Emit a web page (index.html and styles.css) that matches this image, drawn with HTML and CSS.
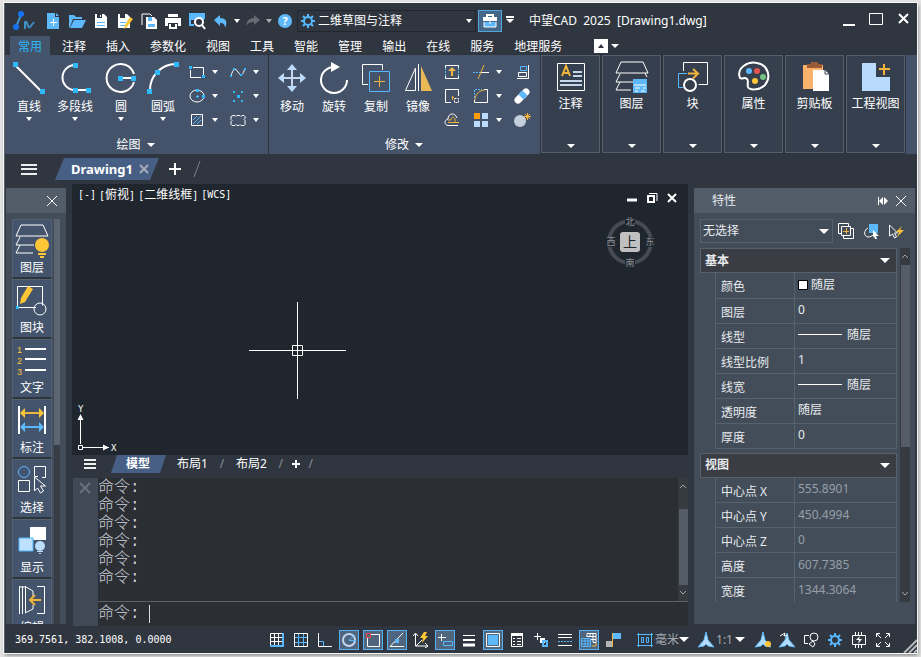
FILE: index.html
```html
<!DOCTYPE html>
<html lang="zh-CN">
<head>
	<meta charset="UTF-8">
	<title>中望CAD 2025 [Drawing1.dwg]</title>
	<link rel="stylesheet" href="styles.css">
</head>
<body>
	<div class="app">
		<!-- 标题栏 -->
		<header class="title_bar">
			<svg class="logo" width="24" height="24" viewBox="0 0 24 24"><path class="logo_line" d="M4 18L9 6M13 20V13C16 11 15 20 18 18L22 13"/><circle class="logo_dot" cx="9" cy="5" r="3"/><circle class="logo_dot" cx="4" cy="18" r="3"/></svg>
			<div class="quick">
				<button aria-label="新建"><svg width="18" height="18" viewBox="0 0 18 18"><path class="fb" d="M3 1h8v4h4v12H3zM12 1l3 3h-3z"/><path d="M9.500 7v7M6 10.500h7"/></svg></button>
				<button aria-label="打开"><svg width="18" height="18" viewBox="0 0 18 18"><path class="fb" d="M1 16V3h5l2 2h6v2H5L2 15zM6 8h12l-4 8H2z"/></svg></button>
				<button aria-label="保存"><svg width="18" height="18" viewBox="0 0 18 18"><path class="fw" d="M3 2h9l3 3v11H3z"/><path class="fd" d="M5 2h5v4H5z"/><path class="fb" d="M5 10h8v1H5zM5 13h8v1H5z"/><path class="fw" d="M8 3h1v2H8z"/></svg></button>
				<button aria-label="另存为"><svg width="18" height="18" viewBox="0 0 18 18"><path class="fw" d="M2 2h9l3 3v11H2z"/><path class="fd" d="M4 2h5v4H4z"/><path class="fb" d="M4 10h6v1H4zM4 13h5v1H4z"/><path class="fy" d="M14 5l3 2-6 8-3 2 1-4z"/></svg></button>
				<button aria-label="全部保存"><svg width="18" height="18" viewBox="0 0 18 18"><path d="M2 13V2h8l2 2"/><path class="fw" d="M6 5h8l3 3v9H6z"/><path class="fb" d="M8 5h4v4H8zM8 12h7v3H8z"/></svg></button>
				<button aria-label="打印"><svg width="18" height="18" viewBox="0 0 18 18"><path class="fw" d="M4 2h10v3H4zM1 6h16v8h-3v-3H4v3H1z"/><path class="s2" d="M6 12v4h6v-4"/></svg></button>
				<button aria-label="打印预览"><svg width="18" height="18" viewBox="0 0 18 18"><path class="fb" d="M2 2h14v6H2z"/><path class="b s2" d="M6 13H2V2h14v5"/><circle class="lens" cx="11" cy="10" r="4"/><path class="s2" d="M14 13l3 4"/></svg></button>
				<button aria-label="撤消"><svg width="18" height="18" viewBox="0 0 18 18"><path class="fb" d="M2 8l6-5v3c6 0 8 4 5 10 0-4-2-5-5-5v3z"/></svg></button>
				<button class="narrow" aria-label="撤消列表"><i class="caret small"></i></button>
				<button class="dim" aria-label="重做"><svg width="18" height="18" viewBox="0 0 18 18"><path class="fg" d="M16 8l-6-5v3C4 6 3 10 2 14c2-3 4-4 8-4v3z"/></svg></button>
				<button class="narrow dim" aria-label="重做列表"><i class="caret small"></i></button>
				<button class="help" aria-label="帮助"><span>?</span></button>
			</div>
			<label class="workspace">
				<svg width="16" height="16" viewBox="0 0 16 16"><circle class="b s2" cx="8" cy="8" r="4"/><path class="b s2" d="M8 1v3M8 12v3M1 8h3M12 8h3M3 3l2 2M11 11l2 2M13 3l-2 2M5 11l-2 2"/></svg>
				<select aria-label="工作空间"><option>二维草图与注释</option></select>
				<i class="caret small"></i>
			</label>
			<button class="tool_box" aria-label="工具箱"><svg width="18" height="18" viewBox="0 0 18 18"><path class="s2" d="M6 5V3h6v2"/><path class="fw" d="M2 5h14v4H2z"/><path class="fb" d="M3 10h12v5H3z"/><path d="M3 10v5h12v-5M9 8v4"/></svg></button>
			<button class="narrow more" aria-label="自定义"><i class="caret"></i></button>
			<h1>中望CAD&nbsp; 2025&nbsp; [Drawing1.dwg]</h1>
			<div class="win_btns">
				<button aria-label="最小化"><svg width="16" height="16" viewBox="0 0 16 16"><path class="s2" d="M2 14h12"/></svg></button>
				<button aria-label="最大化"><svg width="16" height="16" viewBox="0 0 16 16"><path d="M1.500 2.500h13v11h-13z"/></svg></button>
				<button aria-label="关闭"><svg width="16" height="16" viewBox="0 0 16 16"><path class="s2" d="M4 3l9 9M13 3l-9 9"/></svg></button>
			</div>
		</header>

		<!-- 菜单 -->
		<nav class="menu">
			<a class="on" href="#">常用</a><a href="#">注释</a><a href="#">插入</a><a href="#">参数化</a><a href="#">视图</a><a href="#">工具</a><a href="#">智能</a><a href="#">管理</a><a href="#">输出</a><a href="#">在线</a><a href="#">服务</a><a href="#">地理服务</a>
			<button class="fold" aria-label="折叠"><i class="caret small up"></i></button>
			<button class="fold_more" aria-label="折叠选项"><i class="caret"></i></button>
		</nav>

		<!-- 功能区 -->
		<div class="ribbon">
			<section class="group">
				<div class="tools">
					<button class="big wide"><svg width="32" height="32" viewBox="0 0 32 32"><path class="s2" d="M2 3l26 26"/><path class="fc" d="M0 0h5v5H0zM27 27h5v5h-5z"/></svg>直线<i class="caret small"></i></button>
					<button class="big wide"><svg width="32" height="32" viewBox="0 0 32 32"><path class="s2" d="M16 3A12 12 0 0 0 16 28H28"/><path class="fc" d="M14 1h5v5h-5zM14 26h5v5h-5zM27 26h5v5h-5z"/></svg>多段线<i class="caret small"></i></button>
					<button class="big wide"><svg width="32" height="32" viewBox="0 0 32 32"><path class="s2" d="M29 12A14 14 0 1 0 29 20M16 16h12"/><path class="fc" d="M13 14h5v5h-5zM26 14h5v5h-5z"/></svg>圆<i class="caret small"></i></button>
					<button class="big arc"><svg width="32" height="32" viewBox="0 0 32 32"><path class="s2" d="M3 29A26 26 0 0 1 29 2"/><path class="fc" d="M27 0h5v5h-5zM8 8h5v5H8zM0 27h5v5H0z"/></svg>圆弧<i class="caret small"></i></button>
					<div class="minis draw">
						<button aria-label="矩形"><svg width="18" height="18" viewBox="0 0 18 18"><path d="M5 4.500h10.500V12M2.500 7v7.500H13"/><path class="fc" d="M1 3h3v3H1zM14 12h3v3h-3z"/></svg><i class="caret small"></i></button>
						<button aria-label="样条曲线"><svg width="18" height="18" viewBox="0 0 18 18"><path d="M2 13C4 6 6 4 9 9s5 3 7-4"/><path class="fc" d="M1 12h2v2H1zM4 5h2v2H4zM11 11h2v2h-2zM15 5h2v2h-2z"/></svg><i class="caret small"></i></button>
						<button aria-label="椭圆"><svg width="18" height="18" viewBox="0 0 18 18"><ellipse cx="9" cy="9" rx="7" ry="6"/><path class="fc" d="M8 2h3v3H8zM14 8h3v3h-3z"/><path class="b" d="M8 9.500h3M9.500 8v3"/></svg><i class="caret small"></i></button>
						<button aria-label="点"><svg width="18" height="18" viewBox="0 0 18 18"><path class="fc" d="M4 4h2v2H4zM12 4h2v2h-2zM8 8h3v3H8zM4 13h2v2H4zM12 13h2v2h-2z"/></svg><i class="caret small"></i></button>
						<button aria-label="填充"><svg width="18" height="18" viewBox="0 0 18 18"><path d="M3.500 3.500h11v11h-11z"/><path class="b" d="M5 9l4-4M5 13l8-8M9 13l4-4"/></svg><i class="caret small"></i></button>
						<button aria-label="修订云线"><svg width="18" height="18" viewBox="0 0 18 18"><path d="M4 4.500h2l1 1 1-1h3l1 1 1-1h2l1 1v2l-1 1 1 1v4l-1 1h-3l-1-1-1 1H8l-1-1-1 1H3l-1-1v-3l1-1-1-1v-3z"/></svg><i class="caret small"></i></button>
					</div>
				</div>
				<button class="group_name">绘图<i class="caret"></i></button>
			</section>
			<section class="group modify">
				<div class="tools">
					<button class="big"><svg width="32" height="32" viewBox="0 0 32 32"><path class="move s2" d="M16 5v22M5 16h22"/><path class="fl" d="M16 2l5 6H11zM16 30l5-6H11zM2 16l6-5v10zM30 16l-6-5v10z"/></svg>移动</button>
					<button class="big"><svg width="32" height="32" viewBox="0 0 32 32"><path class="s2" d="M17 5A13 13 0 1 0 29 18"/><path class="fw" d="M13 0l9 5-9 5z"/></svg>旋转</button>
					<button class="big"><svg width="32" height="32" viewBox="0 0 32 32"><path d="M8 22.500H2.500v-20h20V8"/><path class="b" d="M9.500 9.500h20v20h-20z"/><path class="y" d="M14 19.500h11M19.500 14v11"/></svg>复制</button>
					<button class="big"><svg width="32" height="32" viewBox="0 0 32 32"><path d="M16.500 2v27M13.500 6v22.500h-10z"/><path class="fa" d="M19 4l11 25H19z"/></svg>镜像</button>
					<div class="minis edit">
						<button aria-label="拉伸"><svg width="18" height="18" viewBox="0 0 18 18"><path d="M2.500 5V2.500h13V5M2.500 13v2.500h13V13"/><path class="b dash" d="M2.500 5v8M15.500 5v8"/><path class="y s2" d="M9 13V7"/><path class="fa" d="M5 8l4-4 4 4z"/></svg></button>
						<button aria-label="修剪"><svg width="18" height="18" viewBox="0 0 18 18"><path class="b dash" d="M1 9.500h8"/><path d="M9 9.500h8"/><path class="y" d="M6 16l6-14"/></svg><i class="caret small"></i></button>
						<button aria-label="对齐"><svg width="18" height="18" viewBox="0 0 18 18"><path d="M15.500 2v14M4 15.500h11M5.500 9.500h8v4h-8z"/><path class="b" d="M7.500 3.500h6v4h-6z"/></svg></button>
						<button aria-label="缩放"><svg width="18" height="18" viewBox="0 0 18 18"><path d="M8 15.500H2.500v-13h13V9"/><path class="dash" d="M11.500 11.500h4v4h-4z"/><path class="y" d="M9 9l3 3M9.500 13V9"/></svg></button>
						<button aria-label="圆角"><svg width="18" height="18" viewBox="0 0 18 18"><path d="M12 2.500h3.500v13H2.500V13"/><path class="y" d="M3 13C3 7 8 3 13 3"/><path class="b dash" d="M2.500 11V2.500H10"/></svg><i class="caret small"></i></button>
						<button aria-label="删除"><svg width="18" height="18" viewBox="0 0 18 18"><path class="eraser_w" d="M5 13l8-8"/><path class="eraser_b" d="M8 10l4-4"/></svg></button>
						<button aria-label="偏移"><svg width="18" height="18" viewBox="0 0 18 18"><path d="M15 14.500H5C1 14 1 9 5 8c0-6 7-7 9-1"/><path class="y" d="M16 11.500H5M12 11V8c-1-3-4-2-4 1H5"/></svg></button>
						<button aria-label="阵列"><svg width="18" height="18" viewBox="0 0 18 18"><path class="fo" d="M2 2h6v6H2z"/><path class="fl" d="M10 2h6v6h-6zM2 10h6v6H2zM10 10h6v6h-6z"/></svg><i class="caret small"></i></button>
						<button aria-label="分解"><svg width="18" height="18" viewBox="0 0 18 18"><circle class="ball" cx="7" cy="10" r="6"/><path class="y" d="M11 5.500h7M14.500 2v7M12 3l5 5M17 3l-5 5"/></svg></button>
					</div>
				</div>
				<button class="group_name">修改<i class="caret"></i></button>
			</section>
			<button class="panel"><svg width="32" height="32" viewBox="0 0 32 32"><path d="M2.500 2.500h27v27h-27z"/><path class="y s2" d="M7 15l4-10 4 10M8 12h6"/><path class="move s2" d="M18 11h9M18 15h9M5 20h22M5 24h22"/></svg>注释<i class="caret"></i></button>
			<button class="panel"><svg width="34" height="32" viewBox="0 0 34 32"><path d="M6 1h22l5 11H1zM5 13l-4 8h17M5 21l-4 8h15M30 12l2 4"/><path class="fb" d="M18 18h14v14H18z"/><path class="grid_in" d="M19 24h12M20 27h5M28 27h3M20 30h3M26 30h4"/></svg>图层<i class="caret"></i></button>
			<button class="panel"><svg width="32" height="32" viewBox="0 0 32 32"><path d="M6.500 10V1.500h24v22h-9"/><path class="b" d="M10 12.500H1.500v14H6"/><circle class="s2" cx="13" cy="24" r="6"/><path class="y s2" d="M11 12.500h10M16 8l5 4.500-5 5"/></svg>块<i class="caret"></i></button>
			<button class="panel"><svg width="34" height="32" viewBox="0 0 34 32"><path class="s2" d="M3 17C-1 7 11 0 20 2c12 2 14 15 8 22-6 6-16 5-17 2-1-4 1-6-1-8-3-3-4 1-7-1z"/><circle class="fb" cx="12" cy="10" r="3"/><circle class="fr" cx="20" cy="10" r="3"/><circle class="fn" cx="26" cy="16" r="3"/><circle class="fy" cx="18" cy="20" r="3"/></svg>属性<i class="caret"></i></button>
			<button class="panel"><svg width="32" height="32" viewBox="0 0 32 32"><path class="paste" d="M4 4h20v24H4z"/><path class="clip" d="M8 3h4V1h7v2h4v4H8z"/><path class="fw" d="M14 9h12l4 4v17H14z"/><path class="fold_line" d="M26 9v4h4"/></svg>剪贴板<i class="caret"></i></button>
			<button class="panel"><svg width="32" height="32" viewBox="0 0 32 32"><path class="part" d="M2 2h14v14h14v14H2z"/><path class="y s2" d="M24 3v11M19 8h11"/></svg>工程视图<i class="caret"></i></button>
		</div>

		<!-- 文件标签 -->
		<div class="doc_bar">
			<button class="burger" aria-label="文件列表"></button>
			<div class="doc_tab"><a href="#">Drawing1</a><button aria-label="关闭图纸"><svg width="10" height="10" viewBox="0 0 10 10"><path class="s2" d="M1 1l8 8M9 1L1 9"/></svg></button></div>
			<button class="add" aria-label="新建图纸"><svg width="12" height="12" viewBox="0 0 12 12"><path class="s2" d="M6 0v12M0 6h12"/></svg></button>
			<svg class="slash" width="8" height="16" viewBox="0 0 8 16"><path d="M7 0L1 16"/></svg>
		</div>

		<div class="main">
			<!-- 左侧工具栏 -->
			<aside class="side">
				<div class="side_head"><button aria-label="关闭工具栏"><svg width="10" height="10" viewBox="0 0 10 10"><path d="M0 0l10 10M10 0L0 10"/></svg></button></div>
				<div class="side_body">
					<div class="side_list">
						<button><svg width="34" height="34" viewBox="0 0 34 34"><path d="M6 1h22l5 11H1zM5 13l-4 8h18M5 21l-4 8h17"/><circle class="fy" cx="27" cy="21" r="7"/><path class="fy" d="M23 29h8v2h-8zM25 32h4v2h-4z"/></svg>图层</button>
						<button><svg width="34" height="34" viewBox="0 0 34 34"><path d="M2.500 25V2.500h25v19M4 23.500h17"/><circle cx="25" cy="25" r="6"/><path class="fy" d="M13 2l5 3-8 13-5 2 1-6z"/><path class="fc" d="M1 22h3v3H1z"/></svg>图块</button>
						<button><svg width="34" height="34" viewBox="0 0 34 34"><path class="s2" d="M10 5h21M10 15h21M10 26h21"/><text class="num" x="2" y="9">1</text><text class="num" x="2" y="20">2</text><text class="num" x="2" y="31">3</text></svg>文字</button>
						<button><svg width="34" height="34" viewBox="0 0 34 34"><path class="s2" d="M4 2v28M30 2v28"/><path class="y s2" d="M8 9h18"/><path class="fy" d="M5 9l5-5v10zM29 9l-5-5v10z"/><path class="b s2" d="M8 23h18"/><path class="fb" d="M5 23l5-5v10zM29 23l-5-5v10z"/></svg>标注</button>
						<button><svg width="34" height="34" viewBox="0 0 34 34"><circle class="b" cx="9" cy="8" r="5.500"/><path d="M23 12.500h-3.500v-10h11v11H27M3.500 16.500h11v11h-11z"/><path d="M19.500 13v14l3-3 3 5 3-2-3-5h5z"/></svg>选择</button>
						<button><svg width="34" height="34" viewBox="0 0 34 34"><path class="fw" d="M15 3h16v13H15z"/><path class="view_box" d="M4 14h14v13H4z"/><circle class="fl" cx="25" cy="22" r="5"/><path class="fl" d="M22 27h6v1h-6zM24 29h2v1h-2z"/></svg>显示</button>
						<button><svg width="34" height="34" viewBox="0 0 34 34"><path d="M4.500 2v28M7.500 2v28M10.500 2v27M4 3h7l7 4v5M10 29l8-4v-4M22 2.500h7.500v27H22"/><path class="y s2" d="M26 16H15M20 11l-5 5 5 5"/></svg>编辑</button>
					</div>
					<div class="side_scroll"></div>
				</div>
			</aside>

			<div class="center">
				<!-- 绘图区 -->
				<div class="canvas">
					<div class="view_label"><a href="#">[-]</a><a href="#">[<b>俯视</b>]</a><a href="#">[<b>二维线框</b>]</a><a href="#">[WCS]</a></div>
					<div class="view_btns">
						<button aria-label="最小化视口"><svg width="12" height="12" viewBox="0 0 12 12"><path class="s3" d="M1 8h10"/></svg></button>
						<button aria-label="还原视口"><svg width="12" height="12" viewBox="0 0 12 12"><path d="M3 1.500h8V9"/><path class="s2" d="M2 4h6v6H2z"/></svg></button>
						<button aria-label="关闭视口"><svg width="12" height="12" viewBox="0 0 12 12"><path class="s2" d="M2 2l8 8M10 2l-8 8"/></svg></button>
					</div>
					<svg class="compass" width="52" height="56" viewBox="0 0 52 56"><circle class="ring" cx="26" cy="27" r="21"/><path class="ring_gap" d="M21 6h10M21 48h10M5 22v10M47 22v10"/><rect class="cube" x="16" y="17" width="20" height="20" rx="3"/><text class="top_t" x="26" y="32">上</text><text x="26" y="10">北</text><text x="26" y="51">南</text><text x="7" y="30">西</text><text x="46" y="30">东</text></svg>
					<svg class="cross" width="98" height="98" viewBox="0 0 98 98"><path d="M48.500 0v97M0 48.500h97M43.500 43.500h10v10h-10z"/></svg>
					<svg class="ucs" width="46" height="50" viewBox="0 0 46 50"><path d="M6.500 41V15M9 44.500h26"/><path d="M4.500 42.500h4v4h-4z"/><path class="fw" d="M6.500 11l3 6h-6zM35 44.500l-6-3v6z"/><text x="4" y="9">Y</text><text x="37" y="48">X</text></svg>
				</div>
				<div class="layout_bar">
					<button class="burger" aria-label="布局列表"></button>
					<a class="on" href="#">模型</a><a href="#">布局1</a><span>/</span><a href="#">布局2</a><span>/</span><button class="add" aria-label="新建布局"><svg width="8" height="8" viewBox="0 0 8 8"><path class="s2" d="M4 0v8M0 4h8"/></svg></button><span>/</span>
				</div>
				<!-- 命令行 -->
				<div class="cmd">
					<div class="cmd_grip"><button aria-label="关闭命令行"><svg width="12" height="12" viewBox="0 0 12 12"><path class="s2" d="M1 1l10 10M11 1L1 11"/></svg></button></div>
					<div class="cmd_text">
						<div class="cmd_top">
							<ul>
								<li>命令:</li>
								<li>命令:</li>
								<li>命令:</li>
								<li>命令:</li>
								<li>命令:</li>
								<li>命令:</li>
							</ul>
							<div class="scroll"><svg width="8" height="5" viewBox="0 0 8 5"><path d="M1 4l3-3 3 3"/></svg><div class="thumb cmd_thumb"></div><svg width="8" height="5" viewBox="0 0 8 5"><path d="M1 1l3 3 3-3"/></svg></div>
						</div>
						<div class="cmd_line"><label for="cmd">命令:</label><i class="cursor"></i><input id="cmd" type="text"></div>
					</div>
				</div>
			</div>

			<!-- 特性面板 -->
			<aside class="props">
				<div class="props_head"><h2>特性</h2><button aria-label="自动隐藏"><svg width="12" height="10" viewBox="0 0 12 10"><path d="M1.500 1v8"/><path class="fw" d="M2 5l4-4v8zM11 5L7 1v8z"/></svg></button><button aria-label="关闭特性"><svg width="10" height="10" viewBox="0 0 10 10"><path d="M0 0l10 10M10 0L0 10"/></svg></button></div>
				<div class="pick">
					<label><select aria-label="选择对象"><option>无选择</option></select><i class="caret large"></i></label>
					<div class="pick_btns">
						<button aria-label="加选"><svg width="16" height="16" viewBox="0 0 16 16"><path d="M3 10.500H.500V.500h10V3M13 5.500h2.500v10h-10V13M3.500 3.500h9v9h-9z"/><path class="y" d="M5 8.500h6M8.500 5v6"/></svg></button>
						<button aria-label="选择对象"><svg width="16" height="16" viewBox="0 0 16 16"><path class="fb" d="M6 1h9v9H6z"/><path d="M5 5c-4 2-5 8 0 9 2 0 4-1 5-2"/><path class="fw" d="M10 7l6 6h-3l1 3h-2l-1-3-1 2z"/></svg></button>
						<button aria-label="快速选择"><svg width="16" height="16" viewBox="0 0 16 16"><path d="M1.500 2v11l3-2 2 4 2-1-2-4h3z"/><path class="fy" d="M14 3L8 9h3l-2 5 7-7h-4z"/></svg></button>
					</div>
				</div>
				<div class="props_body">
					<div class="props_list">
						<button class="sect">基本<i class="caret large"></i></button>
						<table>
							<tr><th>颜色</th><td><i class="swatch"></i>随层</td></tr>
							<tr><th>图层</th><td>0</td></tr>
							<tr><th>线型</th><td><i class="line"></i>随层</td></tr>
							<tr><th>线型比例</th><td>1</td></tr>
							<tr><th>线宽</th><td><i class="line"></i>随层</td></tr>
							<tr><th>透明度</th><td>随层</td></tr>
							<tr><th>厚度</th><td>0</td></tr>
						</table>
						<button class="sect">视图<i class="caret large"></i></button>
						<table class="read">
							<tr><th>中心点 X</th><td>555.8901</td></tr>
							<tr><th>中心点 Y</th><td>450.4994</td></tr>
							<tr><th>中心点 Z</th><td>0</td></tr>
							<tr><th>高度</th><td>607.7385</td></tr>
							<tr><th>宽度</th><td>1344.3064</td></tr>
						</table>
					</div>
					<div class="scroll"><svg width="8" height="5" viewBox="0 0 8 5"><path d="M1 4l3-3 3 3"/></svg><div class="thumb"></div><svg width="8" height="5" viewBox="0 0 8 5"><path d="M1 1l3 3 3-3"/></svg></div>
				</div>
			</aside>
		</div>

		<!-- 状态栏 -->
		<footer class="status">
			<p>369.7561, 382.1008, 0.0000</p>
			<div class="switches">
				<button aria-label="捕捉"><svg width="16" height="16" viewBox="0 0 16 16"><path d="M1.500 1.500h13v13h-13zM5.500 1v14M9.500 1v14M1 5.500h14M1 9.500h14"/><path class="b s2" d="M14 1v13H1"/></svg></button>
				<button aria-label="栅格"><svg width="16" height="16" viewBox="0 0 16 16"><path class="b" d="M5.500 1v14M10.500 1v14M1 5.500h14M1 10.500h14"/><path d="M1.500 1.500h13v13h-13z"/></svg></button>
				<button aria-label="正交"><svg width="16" height="16" viewBox="0 0 16 16"><path d="M1.500 1v13.500H15"/><path class="b" d="M2 9.500h4.500V14"/></svg></button>
				<button class="on" aria-label="极轴"><svg width="16" height="16" viewBox="0 0 16 16"><circle class="move s2" cx="8" cy="8" r="6"/><path class="b" d="M8 8.500h7M8 8l6-5"/></svg></button>
				<button class="on" aria-label="对象捕捉"><svg width="16" height="16" viewBox="0 0 16 16"><path d="M6 2.500h8.500v12h-12V6"/><path class="red" d="M1.500 1.500h4v4h-4z"/></svg></button>
				<button class="on" aria-label="对象追踪"><svg width="16" height="16" viewBox="0 0 16 16"><path d="M14 1L1 14.500h14"/><path class="fb" d="M6 7h4v4H6z"/></svg></button>
				<button aria-label="动态UCS"><svg width="16" height="16" viewBox="0 0 16 16"><path d="M2.500 2v12H15M3 14l6-6M0 4l2.500-3L5 4M12 11l3 3-3 2"/><path class="fy" d="M11 0L7 6h3l-1 5 6-7h-3l2-4z"/></svg></button>
				<button class="on" aria-label="动态输入"><svg width="16" height="16" viewBox="0 0 16 16"><path d="M1 5.500h8M4.500 2v7"/><path class="b" d="M6.500 9.500h9v4h-9z"/></svg></button>
				<button aria-label="线宽显示"><svg width="16" height="16" viewBox="0 0 16 16"><path d="M2 3.500h12"/><path class="s2" d="M2 8h12"/><path class="s3" d="M2 13h12"/></svg></button>
				<button class="on" aria-label="透明度"><svg width="16" height="16" viewBox="0 0 16 16"><path d="M1.500 1.500h13v13h-13z"/><path class="fb" d="M3 3h10v10H3z"/></svg></button>
				<button aria-label="快捷特性"><svg width="16" height="16" viewBox="0 0 16 16"><path d="M2.500 1.500h11v13h-11zM4 6.500h2M8 6.500h4M4 9.500h2M8 9.500h4M4 12.500h2M8 12.500h4"/><path class="fw" d="M2 1h12v3H2z"/></svg></button>
				<button aria-label="选择循环"><svg width="16" height="16" viewBox="0 0 16 16"><path d="M1 4.500h7M4.500 1v7"/><path class="fw" d="M7 6h5v5H7z"/><path class="b s2" d="M10 9h4v5h-4z"/></svg></button>
				<button aria-label="注释监视"><svg width="16" height="16" viewBox="0 0 16 16"><path d="M1 2.500h14M1 5.500h14M1 13.500h14"/><path class="b dash" d="M1 9.500h14"/></svg></button>
				<button class="on" aria-label="布局视口"><svg width="16" height="16" viewBox="0 0 16 16"><path d="M6 5V1.500h9v9H12M9 1v4M12 1v9M6 4.500h9M10 7.500h5"/><path class="b" d="M.500 6.500h9v8h-9zM4 6v9M7 6v9M0 9h10M0 12h10"/><path class="y" d="M15 11v3h-4"/></svg></button>
				<button aria-label="颜色"><svg width="16" height="16" viewBox="0 0 16 16"><path class="fg2" d="M1 9h7v6H1z"/><path class="fb" d="M8 1h8v6H8z"/><path class="y" d="M7.500 1v14"/></svg></button>
			</div>
			<button class="unit"><svg width="16" height="16" viewBox="0 0 16 16"><path class="b" d="M1.500 1v14M14.500 1v14M0 2.500h16M0 13.500h16M4.500 5.500h2v5h-2zM9.500 5.500h2v5h-2z"/></svg>毫米<i class="caret large"></i></button>
			<button class="scale"><svg width="16" height="16" viewBox="0 0 16 16"><path class="jet" d="M8 0l2 8 6 7-6-1-2-2-2 2-6 1 6-7z"/></svg><span>1:1</span><i class="caret large"></i></button>
			<div class="switches">
				<button aria-label="注释可见性"><svg width="16" height="16" viewBox="0 0 16 16"><path class="jet" d="M8 0l2 8 6 7-6-1-2-2-2 2-6 1 6-7z"/><circle class="fy" cx="13" cy="12" r="3"/></svg></button>
				<button aria-label="自动缩放"><svg width="16" height="16" viewBox="0 0 16 16"><path class="jet" d="M8 1l2 7 6 7-6-1-2-2-2 2-6 1 6-7z"/><path d="M1 4l5-3-1 3 4-1"/></svg></button>
				<button aria-label="隔离对象"><svg width="16" height="16" viewBox="0 0 16 16"><path d="M6 3.500H1.500v8H5"/><circle cx="11" cy="5" r="4"/><path d="M10 9l-4 3 4 3 2-3z"/></svg></button>
				<button aria-label="设置"><svg width="16" height="16" viewBox="0 0 16 16"><circle class="b s2" cx="8" cy="8" r="4"/><path class="b s2" d="M8 1v3M8 12v3M1 8h3M12 8h3M3 3l2 2M11 11l2 2M13 3l-2 2M5 11l-2 2"/></svg></button>
				<button aria-label="硬件加速"><svg width="16" height="16" viewBox="0 0 16 16"><path d="M1.500 3.500h13v9h-13zM4.500 0v3M7.500 0v3M10.500 0v3M4.500 13v3M7.500 13v3M10.500 13v3"/><path class="fw" d="M9 4L5 8h3l-1 4 4-5H8z"/></svg></button>
				<button aria-label="全屏"><svg width="16" height="16" viewBox="0 0 16 16"><path d="M1.500 5V1.500H5M11 1.500h3.500V5M14.500 11v3.500H11M5 14.500H1.500V11M2 2l4 4M14 2l-4 4M14 14l-4-4M2 14l4-4"/></svg></button>
			</div>
			<svg class="grip" width="14" height="14" viewBox="0 0 14 14"><path class="s2" d="M1 14L14 1M6 14l8-8M11 14l3-3"/></svg>
		</footer>
	</div>
</body>
</html>
```
FILE: styles.css
```css
/* 默认样式 */
*{ margin:0; padding:0; box-sizing:border-box; }
i,b{ font-style:normal; font-weight:normal; }
body{ background:#e4e4e5; color:#fff; font-size:12px; line-height:16px; font-family:"Noto Sans","Noto Sans CJK SC",sans-serif; }
a{ color:inherit; text-decoration:none; }
li{ list-style:none; }
button,input,select{ border:none; background:none; color:inherit; font:inherit; outline:none; }
button{ display:flex; align-items:center; justify-content:center; white-space:nowrap; flex:none; }
select{ -webkit-appearance:none; appearance:none; flex:1; min-width:0; }
h1,h2{ font-size:12px; font-weight:normal; }

/* 图标 */
svg{ display:block; flex:none; fill:none; stroke:#fff; stroke-width:1; }
.s2{ stroke-width:2; }
.s3{ stroke-width:3; }
.b{ stroke:#56b8ff; }
.y{ stroke:#f0b43c; }
.red{ stroke:#f04848; }
.move{ stroke:#c4d6ee; }
.dash{ stroke-dasharray:2 1; }
.fb,.fc,.fw,.fy,.fa,.fo,.fl,.fd,.fg,.fg2,.fr,.fn{ stroke:none; }
.fb{ fill:#5db9fb; }
.fc{ fill:#2fb9fb; }
.fw{ fill:#fff; }
.fy{ fill:#fdc637; }
.fa{ fill:#eab854; }
.fo{ fill:#ff9d0a; }
.fl{ fill:#bcdcfc; }
.fd{ fill:#30363f; }
.fg{ fill:#8a9096; }
.fg2{ fill:#b4b4b4; }
.fr{ fill:#e35550; }
.fn{ fill:#71c283; }
.logo_line{ stroke:#3f8fc4; stroke-width:2; }
.logo_dot{ stroke:none; fill:#1572f5; }
.lens{ fill:#30363f; stroke-width:2; }
.eraser_w{ stroke:#fff; stroke-width:7; stroke-linecap:round; }
.eraser_b{ stroke:#5db9fb; stroke-width:7; }
.ball{ stroke:none; fill:#c4cede; }
.paste{ stroke:none; fill:#fbb36c; }
.clip{ stroke:none; fill:#9a5a35; }
.fold_line{ stroke:#363f4d; }
.part{ stroke:none; fill:#b8dafd; }
.grid_in{ stroke:#fff; stroke-width:1; }
.view_box{ fill:#bde0ff; stroke:#4fb4fa; }
.jet{ stroke:#5db9fb; fill:#b5dcfb; }
.num{ stroke:none; fill:#fdc637; font-family:"Liberation Sans",sans-serif; font-size:9px; }
.caret{ width:0; height:0; border:4px solid transparent; border-top-color:#fff; border-bottom:none; flex:none; }
.caret.small{ border-width:4px 3px 0; }
.caret.large{ border-width:5px 5px 0; }
.caret.up{ border-width:0 3px 4px; border-bottom:4px solid #30363f; }

.app{ margin:3px 4px 4px; min-height:calc(100vh - 7px); display:flex; flex-direction:column; background:#30363f; border-left:1px solid #59616a; box-shadow:0 0 0 1px #f8f8f8, 1px 2px 4px #777; }

/* 标题栏 */
.title_bar{ display:flex; align-items:center; height:33px; padding:3px 0 0 7px; }
.logo{ margin-right:5px; }
.quick{ display:flex; align-items:center; }
.quick button{ width:24px; height:24px; }
.quick .narrow{ width:8px; }
.dim{ opacity:.6; }
.help span{ width:14px; height:14px; border-radius:50%; background:#5db9fb; font-size:11px; line-height:14px; font-weight:bold; }
.workspace{ display:flex; align-items:center; width:179px; height:22px; padding:0 3px 0 2px; margin-right:2px; border:1px solid #22272e; }
.workspace select{ padding-left:2px; }
.tool_box{ width:24px; height:22px; border:1px solid #4fa8dc; background:#456789; }
.more{ width:16px; height:14px; }
.more:before{ content:''; align-self:flex-start; width:8px; height:2px; margin:2px -8px 0 0; background:#fff; }
.title_bar h1{ flex:1; padding-left:11px; white-space:nowrap; }
.win_btns{ display:flex; gap:1px; margin:0 1px 5px 0; }
.win_btns button{ width:26px; height:20px; }

/* 菜单 */
.menu{ display:flex; align-items:center; height:19px; padding-left:3px; }
.menu a{ padding:0 8px; margin:0 2px; height:19px; line-height:22px; white-space:nowrap; }
.menu .on{ background:#44546a; color:#2db8fa; }
.menu .fold{ width:14px; height:14px; margin-left:22px; background:#fff; }
.fold_more{ width:14px; height:14px; }

/* 功能区 */
.ribbon{ display:flex; gap:2px; height:99px; background:#445369; }
.group{ display:flex; flex-direction:column; width:261px; flex:none; }
.tools{ display:flex; height:80px; padding-top:7px; }
.modify{ width:271px; border-left:1px solid #2a313b; }
.big{ flex-direction:column; justify-content:flex-start; width:42px; }
.big svg{ margin-bottom:5px; }
.big .caret{ margin-top:2px; }
.wide{ width:46px; }
.wide:first-child{ margin-left:1px; }
.arc{ width:38px; }
.modify .big:first-child{ margin-left:2px; }
.minis{ display:grid; grid-auto-rows:24px; align-content:start; }
.minis button{ justify-content:flex-start; gap:6px; height:20px; }
.draw{ grid-template-columns:41px 41px; padding-left:6px; }
.edit{ grid-template-columns:29px 41px 20px; padding-left:4px; }
.group_name{ height:19px; gap:6px; }
.panel{ flex-direction:column; justify-content:flex-start; width:59px; height:98px; padding:5px 0 4px; background:#363f4d; border:1px solid #55606c; outline:1px solid #2c333d; }
.panel svg{ margin-bottom:3px; }
.panel .caret{ margin-top:auto; }

/* 文件标签 */
.doc_bar{ display:flex; align-items:center; height:30px; padding-left:16px; }
.burger{ width:16px; height:11px; border:solid #eee; border-width:2px 0; }
.burger:before{ content:''; width:100%; height:2px; background:#eee; }
.doc_tab{ display:flex; align-items:center; gap:6px; height:22px; margin-left:18px; padding:0 10px 0 16px; background:#485f85; clip-path:polygon(9px 0,100% 0,calc(100% - 9px) 100%,0 100%); }
.doc_tab a{ font-size:13px; font-weight:bold; }
.doc_tab svg{ stroke:#a5adb9; }
.doc_bar .add{ margin:0 12px 0 10px; }
.slash{ stroke:#7c8289; }

.main{ flex:1; display:flex; min-height:0; padding:0 2px 0 1px; }

/* 左侧工具栏 */
.side{ display:flex; flex-direction:column; width:60px; margin:4px 0 2px; background:#434d59; }
.side_head{ display:flex; justify-content:flex-end; height:25px; padding-right:9px; background:#535d69; }
.side_body{ display:flex; flex:1 1 0; gap:2px; margin-top:6px; padding-left:6px; overflow:hidden; min-height:0; }
.side_list{ width:40px; height:100%; overflow:hidden; }
.side_list button{ flex-direction:column; justify-content:flex-start; gap:2px; width:40px; height:60px; padding-top:4px; background:#44546c; border:1px solid #55616f; border-bottom:2px solid #2c343e; }
.side_scroll{ width:6px; background:linear-gradient(#5b6571,#5b6571) 0 0/6px 226px no-repeat #363d46; }

/* 绘图区 */
.center{ flex:1; min-width:0; display:flex; flex-direction:column; margin:0 6px; }
.canvas{ position:relative; flex:1; min-height:200px; background:#20262e; }
.view_label{ display:flex; gap:3px; padding:3px 6px; font-family:"DejaVu Sans Mono","Noto Sans CJK SC",monospace; font-size:10px; }
.view_label b{ font-size:12px; }
.view_btns{ position:absolute; top:8px; right:10px; display:flex; gap:8px; }
.compass{ position:absolute; top:31px; right:32px; }
.compass text{ stroke:none; fill:#8d9298; font-size:9px; text-anchor:middle; }
.compass .top_t{ fill:#222; font-size:14px; }
.ring{ stroke:#454c54; stroke-width:4; }
.ring_gap{ stroke:#20262e; stroke-width:8; }
.cube{ stroke:none; fill:#c0c0c0; }
.cross{ position:absolute; left:177px; top:118px; }
.ucs{ position:absolute; left:2px; bottom:2px; }
.ucs text{ stroke:none; fill:#fff; font-family:"DejaVu Sans Mono",monospace; font-size:9px; }

.layout_bar{ display:flex; align-items:center; height:18px; padding-left:12px; }
.layout_bar .burger{ width:12px; height:10px; margin-right:15px; }
.layout_bar a{ padding:0 11px; line-height:18px; }
.layout_bar .on{ padding:0 16px 0 15px; background:#485f85; font-weight:bold; clip-path:polygon(6px 0,100% 0,calc(100% - 6px) 100%,0 100%); }
.layout_bar span{ width:6px; color:#8a9096; text-align:center; }
.layout_bar .add{ width:24px; }

/* 命令行 */
.cmd{ display:flex; height:148px; margin:5px 0 0 1px; background:#2b2e32; color:#cdd2dc; font-family:"Liberation Mono","Noto Sans CJK SC",monospace; font-size:16px; line-height:18px; }
.cmd_grip{ width:25px; padding:4px 6px; background:#424956; }
.cmd_grip svg{ stroke:#6b727d; stroke-width:1; }
.cmd_text{ flex:1; display:flex; flex-direction:column; }
.cmd_top{ display:flex; justify-content:space-between; height:123px; }
.cmd ul{ padding-top:1px; font-weight:300; }
.cmd_line{ display:flex; align-items:center; height:25px; border-top:1px solid #5c6167; font-weight:300; }
.cursor{ width:1px; height:18px; margin-left:9px; background:#ddd; }
.cmd_line input{ flex:1; min-width:0; }
.scroll{ display:flex; flex-direction:column; align-items:center; justify-content:space-between; width:10px; padding:6px 0; background:#363a41; }
.scroll svg{ stroke:#a0a5ab; }
.thumb{ width:9px; height:182px; background:#535c67; margin:6px 0 auto; }
.cmd_thumb{ height:76px; margin-top:20px; }

/* 特性面板 */
.props{ display:flex; flex-direction:column; width:221px; margin:4px 0 2px; background:#434d59; color:#e8ebee; }
.props_head{ display:flex; align-items:center; gap:7px; height:25px; padding:0 9px 0 18px; background:#535d69; }
.props_head h2{ flex:1; }
.pick{ display:flex; align-items:center; gap:5px; height:35px; padding:6px 11px 5px 6px; }
.pick label{ flex:1; display:flex; align-items:center; height:24px; padding:0 3px 0 2px; border:1px solid #56616d; }
.pick_btns{ display:flex; gap:9px; }
.props_body{ flex:1 1 0; display:flex; gap:3px; min-height:0; margin-bottom:22px; padding:0 5px 0 6px; }
.props_list{ flex:1; overflow:hidden; }
.sect{ justify-content:space-between; width:100%; height:25px; padding:0 6px 0 4px; background:#3a3d43; border:1px solid #55616d; font-weight:bold; }
.props table{ width:calc(100% - 15px); margin:0 0 4px 15px; border-collapse:collapse; table-layout:fixed; }
.props tr{ height:25px; }
.props th,.props td{ border:1px solid #55636d; line-height:16px; }
.props tr:first-child th,.props tr:first-child td{ border-top:none; }
.props th{ width:79px; padding:4px 0 0 5px; text-align:left; font-weight:normal; }
.props td{ padding:0 0 1px 3px; }
.props .read td{ color:#969fa8; }
.swatch{ display:inline-block; width:10px; height:10px; margin-right:3px; background:#fff; border:1px solid #000; vertical-align:-1px; }
.line{ display:inline-block; width:44px; height:1px; margin-right:5px; background:#fff; vertical-align:4px; }

/* 状态栏 */
.status{ display:flex; align-items:center; height:27px; }
.status p{ flex:1; padding-left:10px; font-family:"DejaVu Sans Mono",monospace; font-size:10px; white-space:nowrap; }
.switches{ display:flex; gap:4px; }
.switches button{ width:20px; height:20px; }
.switches .on{ border:1px solid #58b0ef; background:#50657e; }
.unit,.scale{ color:#a4a9b0; }
.unit{ margin-left:14px; }
.unit svg{ margin-right:2px; }
.scale{ margin:0 8px 0 9px; }
.scale span{ width:21px; }
.grip{ align-self:flex-end; margin-left:10px; stroke:#b5b7ba; }
```
